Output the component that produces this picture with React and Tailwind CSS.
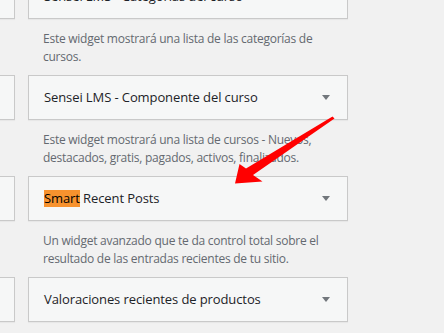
import React from 'react';

const widgets = [
  {
    title: 'Sensei LMS - Categorías del curso',
    desc: ['Este widget mostrará una lista de las categorías de', 'cursos.'],
  },
  {
    title: 'Sensei LMS - Componente del curso',
    desc: ['Este widget mostrará una lista de cursos - Nuevos,', 'destacados, gratis, pagados, activos, finalizados.'],
  },
  {
    title: 'Smart Recent Posts',
    highlight: true,
    desc: ['Un widget avanzado que te da control total sobre el', 'resultado de las entradas recientes de tu sitio.'],
  },
  {
    title: 'Valoraciones recientes de productos',
    desc: [],
  },
];

const WidgetRow = ({ widget }) => (
  <div className="flex gap-[13px]">
    {/* columna izquierda, cortada */}
    <div className="w-[15px] h-[45px] bg-[#f6f7f7] border border-l-0 border-[#c9c9c9] shadow-[0_1px_1px_rgba(0,0,0,0.04)]" />
    <div className="w-[320px] h-[45px] flex items-center justify-between pl-[15px] pr-[17px] bg-[#f6f7f7] border border-[#c9c9c9] shadow-[0_1px_1px_rgba(0,0,0,0.04)]">
      <h3 className="text-[13px] leading-[17px] tracking-[-0.1px] text-[#1d2327] whitespace-nowrap">
        {widget.highlight ? (
          <>
            <span className="inline-block bg-[#f7922e] text-black">Smart</span> Recent Posts
          </>
        ) : (
          widget.title
        )}
      </h3>
      <span className="w-0 h-0 border-l-[4px] border-r-[4px] border-t-[5px] border-l-transparent border-r-transparent border-t-[#72777c]" />
    </div>
  </div>
);

const Arrow = () => (
  <svg className="absolute left-0 top-0 pointer-events-none" width="444" height="333" viewBox="0 0 444 333">
    <path
      d="M332.5 116.5 L334.5 118.5 L253 175 L262.5 181.5 L235 183.5 L239.5 164 L246 168.5 Z"
      fill="#ff0000"
    />
  </svg>
);

export default function App() {
  return (
    <div
      className="relative w-[444px] h-[333px] overflow-hidden bg-[#f1f1f1]"
      style={{ fontFamily: '"Open Sans", "Noto Sans", sans-serif' }}
    >
      <div className="-mt-[26px] flex flex-col">
        {widgets.map((w) => (
          <div key={w.title}>
            <WidgetRow widget={w} />
            {w.desc.length > 0 && (
              <div className="h-[56px] pl-[43px] pt-[11px] text-[12px] leading-[18px] tracking-[-0.25px] text-[#646970]">
                {w.desc.map((line) => (
                  <div key={line} className="whitespace-nowrap">{line}</div>
                ))}
              </div>
            )}
          </div>
        ))}
      </div>
      <Arrow />
    </div>
  );
}
